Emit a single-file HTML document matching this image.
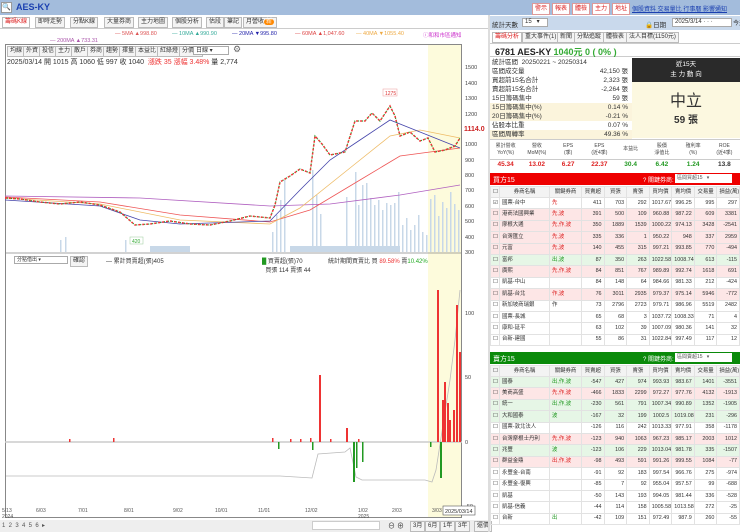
<!DOCTYPE html>
<html><head><meta charset="utf-8"><style>
*{margin:0;padding:0;box-sizing:border-box}
body{width:740px;height:532px;overflow:hidden;background:#fff;font-family:"Liberation Sans","Noto Sans CJK TC",sans-serif;font-size:7px;color:#333;position:relative}
.a{position:absolute;white-space:nowrap}
.btn{position:absolute;border:1px solid #bbb;background:#f4f4f4;font-size:6px;line-height:9px;padding:0 2px;color:#333}
.rb{position:absolute;top:3px;height:12px;border:1px solid #d99;background:#fff;color:#d22;font-size:6px;line-height:10px;padding:0 2px}
table{border-collapse:collapse;position:absolute;left:490px;width:250px;font-size:5.4px;table-layout:fixed}
td{border:1px solid #e2e2e2;height:11.4px;line-height:9px;padding:0 2px;text-align:right;overflow:hidden;white-space:nowrap}
td:nth-child(1){text-align:center;width:9px}td:nth-child(2){text-align:left;width:50px}td:nth-child(3){text-align:left;width:32px;color:#d22}
tr.p td{background:#fde6e6}tr.g td{background:#e6f6e6}tr.h td{background:#f3f3f3;text-align:center;height:11px}
.st div{height:9px;line-height:9px;padding-left:2px;font-size:6.5px;position:relative}
.st span{position:absolute;right:4px}
</style></head><body>
<div class="a" style="left:0;top:0;width:740px;height:15px;background:#a3bcdc"></div>
<div class="a" style="left:1px;top:2px;width:11px;height:11px;background:#fff;border:1px solid #999;font-size:7px;line-height:9px">🔍</div>
<div class="a" style="left:16px;top:2px;font-size:9px;font-weight:bold;color:#1a3fb0">AES-KY</div>
<div class="rb" style="left:532px">警示</div><div class="rb" style="left:552px">報表</div><div class="rb" style="left:572px">體檢</div><div class="rb" style="left:592px">主力</div><div class="rb" style="left:612px">地址</div>
<div class="a" style="left:632px;top:4px;font-size:6px;color:#1a3fb0;text-decoration:underline">個股資料 交易量比 行事曆 影響通知</div>
<div class="a" style="left:0;top:16px;width:488px;height:13px;border-bottom:1px solid #ccc"></div>
<div class="btn" style="left:2px;top:17px;color:#d22;background:#fff">籌碼K線</div><div class="btn" style="left:35px;top:17px">即時走勢</div><div class="btn" style="left:70px;top:17px">分點K線</div><div class="btn" style="left:104px;top:17px">大量券商</div><div class="btn" style="left:138px;top:17px">主力地圖</div><div class="btn" style="left:172px;top:17px">個股分析</div><div class="btn" style="left:206px;top:17px">估段</div><div class="btn" style="left:224px;top:17px">筆記</div><div class="btn" style="left:243px;top:17px">月營收<span style="background:#f80;color:#fff;border-radius:4px;padding:0 2px">新</span></div>
<div class="a" style="left:115px;top:31px;font-size:5.5px;color:#d55">— 5MA ▲998.80</div>
<div class="a" style="left:172px;top:31px;font-size:5.5px;color:#3a9">— 10MA ▲990.90</div>
<div class="a" style="left:232px;top:31px;font-size:5.5px;color:#22a">— 20MA ▼995.80</div>
<div class="a" style="left:295px;top:31px;font-size:5.5px;color:#d44">— 60MA ▲1,047.60</div>
<div class="a" style="left:356px;top:31px;font-size:5.5px;color:#ea4">— 40MA ▼1055.40</div>
<div class="a" style="left:423px;top:31px;font-size:5.5px;color:#c3c">ⓘ和和市區通知</div>
<div class="a" style="left:50px;top:38px;font-size:5.5px;color:#a5a">— 200MA ▲733.31</div>
<div class="a" style="left:5px;top:44px;width:457px;height:474px;border:1px solid #888"></div>
<div class="a" style="left:428px;top:45px;width:33px;height:472px;background:#fdfbdc"></div>
<div class="btn" style="left:7px;top:46px">均線</div><div class="btn" style="left:23px;top:46px">外資</div><div class="btn" style="left:39px;top:46px">投信</div><div class="btn" style="left:55px;top:46px">主力</div><div class="btn" style="left:71px;top:46px">散戶</div><div class="btn" style="left:87px;top:46px">券商</div><div class="btn" style="left:103px;top:46px">趨勢</div><div class="btn" style="left:119px;top:46px">擇量</div><div class="btn" style="left:135px;top:46px">本益比</div><div class="btn" style="left:157px;top:46px">紅綠燈</div><div class="btn" style="left:179px;top:46px">分價量</div>
<div class="a" style="left:193px;top:46px;width:36px;height:9px;border:1px solid #aaa;background:#fff;font-size:6px;line-height:8px;padding-left:2px">日線 ▾</div>
<div class="a" style="left:233px;top:44px;font-size:9px;color:#666">⚙</div>
<div class="a" style="left:7px;top:57px;font-size:7px;color:#333">2025/03/14 開 1015 高 1060 低 997 收 1040 &nbsp;<span style="color:#e33">漲跌 35 漲幅 3.48%</span> 量 2,774</div>
<svg class="a" style="left:0;top:0" width="490" height="532">
<g font-size="5.5" fill="#444" font-family="Liberation Sans">
<text x="465" y="69">1500</text><text x="465" y="85">1400</text><text x="465" y="100">1300</text><text x="465" y="116">1200</text><text x="465" y="146">1000</text><text x="465" y="162">900</text><text x="465" y="177">800</text><text x="465" y="192">700</text><text x="465" y="208">600</text><text x="465" y="223">500</text><text x="465" y="239">400</text><text x="465" y="254">300</text>
<text x="465" y="315">100</text><text x="465" y="379">50</text><text x="465" y="444">0</text><text x="465" y="508">-50</text>
</g>
<text x="464" y="131" font-size="7" fill="#c22" font-weight="bold">1114.0</text>
<g fill="#c8d8e8">
<rect x="60" y="240" width="1.5" height="12"/><rect x="65" y="237" width="1.5" height="15"/><rect x="125" y="240" width="1.5" height="12"/><rect x="272" y="232" width="1.5" height="20"/><rect x="276" y="215" width="1.5" height="37"/><rect x="280" y="200" width="1.5" height="52"/><rect x="284" y="180" width="1.5" height="72"/>
<rect x="312" y="170" width="1.5" height="82"/><rect x="316" y="195" width="1.5" height="57"/><rect x="320" y="214" width="1.5" height="38"/><rect x="346" y="197" width="1.5" height="55"/><rect x="355" y="172" width="1.5" height="80"/><rect x="358" y="205" width="1.5" height="47"/><rect x="362" y="185" width="1.5" height="67"/><rect x="366" y="183" width="1.5" height="69"/><rect x="370" y="198" width="1.5" height="54"/><rect x="374" y="205" width="1.5" height="47"/><rect x="378" y="200" width="1.5" height="52"/><rect x="382" y="210" width="1.5" height="42"/><rect x="386" y="203" width="1.5" height="49"/><rect x="390" y="205" width="1.5" height="47"/><rect x="394" y="203" width="1.5" height="49"/><rect x="398" y="192" width="1.5" height="60"/><rect x="402" y="225" width="1.5" height="27"/><rect x="406" y="218" width="1.5" height="34"/><rect x="410" y="230" width="1.5" height="22"/><rect x="414" y="225" width="1.5" height="27"/><rect x="418" y="215" width="1.5" height="37"/><rect x="422" y="232" width="1.5" height="20"/><rect x="426" y="235" width="1.5" height="17"/><rect x="430" y="199" width="1.5" height="53"/><rect x="434" y="195" width="1.5" height="57"/><rect x="438" y="216" width="1.5" height="36"/><rect x="442" y="202" width="1.5" height="50"/><rect x="446" y="208" width="1.5" height="44"/><rect x="450" y="192" width="1.5" height="60"/><rect x="454" y="204" width="1.5" height="48"/><rect x="458" y="210" width="1.5" height="42"/>
<rect x="150" y="246" width="40" height="6"/><rect x="290" y="246" width="110" height="6"/>
</g>
<polyline fill="none" stroke="#b060c0" stroke-width="0.8" points="5,196 140,198 270,206 330,204 400,195 460,185"/>
<polyline fill="none" stroke="#e55" stroke-width="0.8" points="5,197 100,202 180,215 270,222 310,210 360,180 400,156 460,148"/>
<polyline fill="none" stroke="#eb6" stroke-width="0.8" points="5,198 100,204 180,220 270,224 300,208 350,168 390,136 420,130 460,138"/>
<polyline fill="none" stroke="#44a" stroke-width="0.8" points="5,200 100,206 140,220 180,224 270,221 300,190 330,160 360,140 390,120 420,132 460,148"/>
<polyline fill="none" stroke="#e33" stroke-width="1.5" stroke-dasharray="2,2" points="5,198 20,199 40,202 60,204 80,202 100,205 120,212 135,225 150,224 170,221 190,224 210,225 230,221 250,216 270,218 275,205 280,182 290,176 300,169 310,173 315,136 322,144 330,155 345,152 355,121 365,121 372,113 380,121 390,106 395,116 400,136 410,132 420,141 428,138 435,152 445,150 455,146 460,138"/>
<polyline fill="none" stroke="#292" stroke-width="1.2" stroke-dasharray="1,3" stroke-dashoffset="2" points="5,198 20,199 40,202 60,204 80,202 100,205 120,212 135,225 150,224 170,221 190,224 210,225 230,221 250,216 270,218 275,205 280,182 290,176 300,169 310,173 315,136 322,144 330,155 345,152 355,121 365,121 372,113 380,121 390,106 395,116 400,136 410,132 420,141 428,138 435,152 445,150 455,146 460,138"/>
<rect x="383" y="89" width="14" height="7" fill="#fff" stroke="#e99" stroke-width="0.5"/><text x="385" y="95" font-size="5" fill="#d33">1275</text>
<rect x="130" y="237" width="13" height="7" fill="#fff" stroke="#9c9" stroke-width="0.5"/><text x="132" y="243" font-size="5" fill="#3a3">420</text>
<line x1="5" y1="253" x2="462" y2="253" stroke="#888" stroke-width="0.7"/>
<line x1="5" y1="442" x2="462" y2="442" stroke="#ccc" stroke-width="1.5"/>
<polyline fill="none" stroke="#bbb" stroke-width="0.8" points="6,476 280,476 312,478 318,454 345,452 350,448 356,477 362,480 425,480 432,482 436,470 450,380 455,340 460,290"/>
<g fill="#e33">
<rect x="69" y="439" width="1.5" height="3"/><rect x="113" y="438" width="1.5" height="4"/><rect x="319" y="375" width="2" height="67"/><rect x="346" y="428" width="2" height="14"/><rect x="437" y="290" width="2" height="152"/><rect x="442" y="400" width="2" height="42"/><rect x="444" y="382" width="2" height="60"/><rect x="447" y="403" width="2" height="39"/><rect x="449" y="420" width="2" height="22"/><rect x="453" y="410" width="2" height="32"/><rect x="456" y="305" width="2" height="137"/><rect x="459" y="352" width="2" height="90"/>
<rect x="272" y="438" width="1.5" height="4"/><rect x="290" y="439" width="1.5" height="3"/><rect x="300" y="439" width="1.5" height="3"/><rect x="310" y="438" width="1.5" height="4"/><rect x="330" y="439" width="1.5" height="3"/><rect x="358" y="439" width="1.5" height="3"/>
</g>
<g fill="#292">
<rect x="278" y="442" width="1.5" height="7"/><rect x="312" y="442" width="1.5" height="8"/><rect x="353" y="442" width="2" height="40"/><rect x="356" y="442" width="1.5" height="26"/><rect x="362" y="442" width="1.5" height="20"/><rect x="430" y="442" width="1.5" height="5"/><rect x="440" y="442" width="2" height="36"/>
</g>
<g font-size="5" fill="#555"><text x="2" y="512">5/13</text><text x="2" y="518">2024</text><text x="36" y="512">6/03</text><text x="78" y="512">7/01</text><text x="124" y="512">8/01</text><text x="173" y="512">9/02</text><text x="215" y="512">10/01</text><text x="258" y="512">11/01</text><text x="305" y="512">12/02</text><text x="358" y="512">1/02</text><text x="358" y="518">2025</text><text x="392" y="512">2/03</text><text x="432" y="512">3/03</text></g>
<rect x="443" y="506" width="32" height="9" fill="#fff" stroke="#555" stroke-width="0.6"/><text x="445" y="513" font-size="5.5" fill="#333">2025/03/14</text>
</svg>
<div class="a" style="left:14px;top:256px;width:54px;height:8px;border:1px solid #aaa;font-size:5px;line-height:7px;padding-left:2px">分點借出 ▾</div>
<div class="btn" style="left:70px;top:256px">確認</div>
<div class="a" style="left:106px;top:256px;font-size:6px">— 累計買賣超(張)405</div>
<div class="a" style="left:262px;top:256px;font-size:6px"><span style="color:#292">█</span> 買賣超(張)70<br>&nbsp;&nbsp;買張 114 賣張 44</div>
<div class="a" style="left:328px;top:256px;font-size:6px">統計期間買賣比 買 <span style="color:#e33">89.58%</span> 賣<span style="color:#2a2">10.42%</span></div>
<div class="a" style="left:0;top:520px;width:488px;height:12px;background:#eee"></div>
<div class="a" style="left:2px;top:522px;font-size:6px;color:#555">1 &nbsp;2 &nbsp;3 &nbsp;4 &nbsp;5 &nbsp;6 &nbsp;▸</div>
<div class="a" style="left:312px;top:521px;width:68px;height:9px;background:#fff;border:1px solid #ccc"></div>
<div class="a" style="left:388px;top:521px;font-size:7px">⊖ ⊕</div>
<div class="btn" style="left:410px;top:521px">3月</div><div class="btn" style="left:425px;top:521px">6月</div><div class="btn" style="left:440px;top:521px">1年</div><div class="btn" style="left:455px;top:521px">3年</div><div class="btn" style="left:474px;top:521px">還價</div>
<div class="a" style="left:488px;top:15px;width:2px;height:517px;background:#ddd"></div>
<div class="a" style="left:490px;top:16px;width:250px;height:14px;background:#c9d9ec"></div>
<div class="a" style="left:492px;top:19px;font-size:6.5px">統計天數</div>
<div class="a" style="left:522px;top:18px;width:26px;height:9px;background:#fff;border:1px solid #aaa;font-size:6px;line-height:7px;padding-left:2px">15 &nbsp;&nbsp;▾</div>
<div class="a" style="left:645px;top:19px;font-size:6.5px">🔒日期</div>
<div class="a" style="left:672px;top:18px;width:60px;height:9px;background:#fff;border:1px solid #aaa;font-size:6px;line-height:7px;padding-left:2px">2025/3/14 · · ·</div>
<div class="a" style="left:733px;top:18px;font-size:6px">今天</div>
<div class="btn" style="left:492px;top:32px;color:#d22;background:#fff">籌碼分析</div><div class="btn" style="left:522px;top:32px">重大事件(1)</div><div class="btn" style="left:557px;top:32px">新聞</div><div class="btn" style="left:574px;top:32px">分點追蹤</div><div class="btn" style="left:603px;top:32px">體檢表</div><div class="btn" style="left:626px;top:32px">法人目標(1150元)</div>
<div class="a" style="left:490px;top:43px;width:250px;height:14px;border-top:1px solid #ccc;border-bottom:1px solid #ccc"></div>
<div class="a" style="left:495px;top:45px;font-size:9px;font-weight:bold;color:#222">6781 AES-KY <span style="color:#3a3">1040元 0 ( 0% )</span></div>
<div class="a st" style="left:490px;top:58px;width:142px">
<div>統計區間 &nbsp;20250221 ~ 20250314</div>
<div>區間成交量<span>42,150 張</span></div>
<div>買超前15名合計<span>2,323 張</span></div>
<div>賣超前15名合計<span>-2,264 張</span></div>
<div>15日籌碼集中<span>59 張</span></div>
<div style="background:#fbf4dc">15日籌碼集中(%)<span>0.14 %</span></div>
<div style="background:#fbf4dc">20日籌碼集中(%)<span>-0.21 %</span></div>
<div>佔股本比重<span>0.07 %</span></div>
<div style="background:#fbf4dc">區間周轉率<span>49.36 %</span></div>
</div>
<div class="a" style="left:632px;top:58px;width:108px;height:24px;background:#2a2a2a;color:#fff;text-align:center;font-size:6.5px;line-height:10px;padding-top:2px">近15天<br>主 力 動 向</div>
<div class="a" style="left:632px;top:82px;width:108px;height:56px;background:#fcf8e0;text-align:center"><div style="font-size:16px;margin-top:5px;color:#333">中立</div><div style="font-size:10px;font-weight:bold">59 張</div></div>
<div class="a" style="left:490px;top:139px;width:250px;height:21px;border-top:1px solid #ccc;border-bottom:1px solid #ccc;font-size:5px;color:#444;line-height:7px;text-align:center;display:flex">
<div style="flex:1;padding-top:3px">累計營收<br>YoY(%)</div><div style="flex:1;padding-top:3px">營收<br>MoM(%)</div><div style="flex:1;padding-top:3px">EPS<br>(季)</div><div style="flex:1;padding-top:3px">EPS<br>(近4季)</div><div style="flex:1;padding-top:6px">本益比</div><div style="flex:1;padding-top:3px">股價<br>淨值比</div><div style="flex:1;padding-top:3px">殖利率<br>(%)</div><div style="flex:1;padding-top:3px">ROE<br>(近4季)</div></div>
<div class="a" style="left:490px;top:161px;width:250px;height:10px;font-size:6.5px;font-weight:bold;text-align:center;display:flex">
<div style="flex:1;color:#d22">45.34</div><div style="flex:1;color:#d22">13.02</div><div style="flex:1;color:#d22">6.27</div><div style="flex:1;color:#d22">22.37</div><div style="flex:1;color:#292">30.4</div><div style="flex:1;color:#292">6.42</div><div style="flex:1;color:#292">1.24</div><div style="flex:1;color:#333">13.8</div></div>
<div class="a" style="left:490px;top:173px;width:250px;height:12px;background:#e00"></div>
<div class="a" style="left:493px;top:175px;color:#fff;font-size:7px">買方15</div>
<div class="a" style="left:643px;top:175px;color:#fff;font-size:6px">? 關鍵券商:</div>
<div class="a" style="left:675px;top:174px;width:57px;height:9px;background:#fff;font-size:5px;line-height:9px;padding-left:2px;color:#555">區間買超15 &nbsp;&nbsp;▾</div>
<table style="top:186px">
<tr class="h"><td>☐</td><td style="text-align:center">券商名稱</td><td style="color:#333;text-align:center">關鍵券商</td><td>買賣超</td><td>買張</td><td>賣張</td><td>買均價</td><td>賣均價</td><td>交易量</td><td>損益(萬)</td></tr>
<tr><td>☑</td><td>國票-台中</td><td>先</td><td>411</td><td>703</td><td>292</td><td>1017.67</td><td>996.25</td><td>995</td><td>297</td></tr>
<tr class="p"><td>☐</td><td>港商法國興業</td><td>先,波</td><td>391</td><td>500</td><td>109</td><td>960.88</td><td>987.22</td><td>609</td><td>3381</td></tr>
<tr class="p"><td>☐</td><td>摩根大通</td><td>先,作,波</td><td>350</td><td>1889</td><td>1539</td><td>1000.22</td><td>974.13</td><td>3428</td><td>-2541</td></tr>
<tr class="p"><td>☐</td><td>台灣匯立</td><td>先,波</td><td>335</td><td>336</td><td>1</td><td>950.22</td><td>948</td><td>337</td><td>2959</td></tr>
<tr class="p"><td>☐</td><td>元富</td><td>先,波</td><td>140</td><td>455</td><td>315</td><td>997.21</td><td>993.85</td><td>770</td><td>-494</td></tr>
<tr class="g"><td>☐</td><td>富邦</td><td style="color:#292">出,波</td><td>87</td><td>350</td><td>263</td><td>1022.58</td><td>1008.74</td><td>613</td><td>-115</td></tr>
<tr class="p"><td>☐</td><td>廣熙</td><td>先,作,波</td><td>84</td><td>851</td><td>767</td><td>989.89</td><td>992.74</td><td>1618</td><td>691</td></tr>
<tr><td>☐</td><td>凱基-中山</td><td></td><td>84</td><td>148</td><td>64</td><td>984.66</td><td>981.33</td><td>212</td><td>-424</td></tr>
<tr class="p"><td>☐</td><td>凱基-台北</td><td>作,波</td><td>76</td><td>3011</td><td>2935</td><td>979.37</td><td>975.14</td><td>5946</td><td>-772</td></tr>
<tr><td>☐</td><td>新加坡商瑞銀</td><td style="color:#333">作</td><td>73</td><td>2796</td><td>2723</td><td>979.71</td><td>986.96</td><td>5519</td><td>2482</td></tr>
<tr><td>☐</td><td>國票-長城</td><td></td><td>65</td><td>68</td><td>3</td><td>1037.72</td><td>1008.33</td><td>71</td><td>4</td></tr>
<tr><td>☐</td><td>康和-延平</td><td></td><td>63</td><td>102</td><td>39</td><td>1007.09</td><td>980.36</td><td>141</td><td>32</td></tr>
<tr><td>☐</td><td>台新-建國</td><td></td><td>55</td><td>86</td><td>31</td><td>1022.84</td><td>997.49</td><td>117</td><td>12</td></tr>
</table>
<div class="a" style="left:490px;top:352px;width:250px;height:12px;background:#0a8a0a"></div>
<div class="a" style="left:493px;top:354px;color:#fff;font-size:7px">賣方15</div>
<div class="a" style="left:643px;top:354px;color:#fff;font-size:6px">? 關鍵券商:</div>
<div class="a" style="left:675px;top:353px;width:57px;height:9px;background:#fff;font-size:5px;line-height:9px;padding-left:2px;color:#555">區間賣超15 &nbsp;&nbsp;▾</div>
<table style="top:365px">
<tr class="h"><td>☐</td><td style="text-align:center">券商名稱</td><td style="color:#333;text-align:center">關鍵券商</td><td>買賣超</td><td>買張</td><td>賣張</td><td>買均價</td><td>賣均價</td><td>交易量</td><td>損益(萬)</td></tr>
<tr class="g"><td>☐</td><td>國泰</td><td style="color:#292">出,作,波</td><td>-547</td><td>427</td><td>974</td><td>993.93</td><td>983.67</td><td>1401</td><td>-3551</td></tr>
<tr class="p"><td>☐</td><td>美商高盛</td><td>先,作,波</td><td>-466</td><td>1833</td><td>2299</td><td>972.27</td><td>977.76</td><td>4132</td><td>-1913</td></tr>
<tr class="g"><td>☐</td><td>統一</td><td style="color:#292">出,作,波</td><td>-230</td><td>561</td><td>791</td><td>1007.34</td><td>990.89</td><td>1352</td><td>-1905</td></tr>
<tr class="g"><td>☐</td><td>大和國泰</td><td style="color:#292">波</td><td>-167</td><td>32</td><td>199</td><td>1002.5</td><td>1019.08</td><td>231</td><td>-296</td></tr>
<tr><td>☐</td><td>國票-敦北法人</td><td></td><td>-126</td><td>116</td><td>242</td><td>1013.33</td><td>977.91</td><td>358</td><td>-1178</td></tr>
<tr class="p"><td>☐</td><td>台灣摩根士丹利</td><td>先,作,波</td><td>-123</td><td>940</td><td>1063</td><td>967.23</td><td>985.17</td><td>2003</td><td>1012</td></tr>
<tr class="g"><td>☐</td><td>兆豐</td><td style="color:#292">波</td><td>-123</td><td>106</td><td>229</td><td>1013.04</td><td>981.78</td><td>335</td><td>-1507</td></tr>
<tr class="p"><td>☐</td><td>群益金鼎</td><td>出,作,波</td><td>-98</td><td>493</td><td>591</td><td>991.26</td><td>999.55</td><td>1084</td><td>-77</td></tr>
<tr><td>☐</td><td>永豐金-台南</td><td></td><td>-91</td><td>92</td><td>183</td><td>997.54</td><td>966.76</td><td>275</td><td>-974</td></tr>
<tr><td>☐</td><td>永豐金-復興</td><td></td><td>-85</td><td>7</td><td>92</td><td>955.04</td><td>957.57</td><td>99</td><td>-688</td></tr>
<tr><td>☐</td><td>凱基</td><td></td><td>-50</td><td>143</td><td>193</td><td>994.05</td><td>981.44</td><td>336</td><td>-528</td></tr>
<tr><td>☐</td><td>凱基-信義</td><td></td><td>-44</td><td>114</td><td>158</td><td>1005.58</td><td>1013.58</td><td>272</td><td>-25</td></tr>
<tr><td>☐</td><td>台新</td><td style="color:#292">出</td><td>-42</td><td>109</td><td>151</td><td>972.49</td><td>987.9</td><td>260</td><td>-55</td></tr>
</table>
</body></html>
